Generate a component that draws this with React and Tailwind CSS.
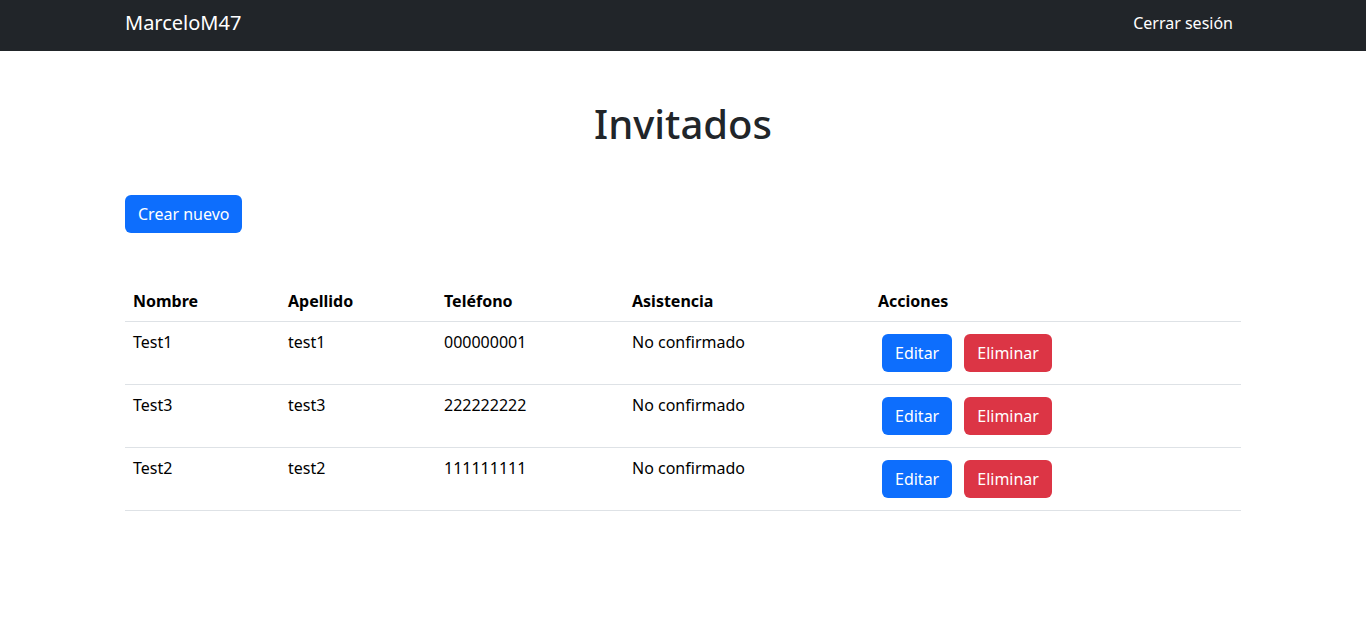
const invitados = [
  { nombre: 'Test1', apellido: 'test1', telefono: '000000001', asistencia: 'No confirmado' },
  { nombre: 'Test3', apellido: 'test3', telefono: '222222222', asistencia: 'No confirmado' },
  { nombre: 'Test2', apellido: 'test2', telefono: '111111111', asistencia: 'No confirmado' },
];

const App = () => {
  return (
    <div className="min-h-screen bg-white font-['Noto_Sans',sans-serif] text-[#212529]">
      <nav className="bg-[#212529] h-[51px]">
        <div className="w-[1116px] mx-auto h-full flex items-center justify-between">
          <span className="text-white text-[20px] leading-[30px] -mt-[5px]">MarceloM47</span>
          <a href="#" className="text-white text-base px-2 -mt-[5px]">Cerrar sesión</a>
        </div>
      </nav>

      <div className="w-[1116px] mx-auto">
        <h1 className="text-[40px] leading-[48px] font-medium text-center mt-[49px] mb-[47px]">Invitados</h1>

        <button className="bg-[#0d6efd] text-white text-base leading-6 px-[13px] py-[7px] rounded-md">
          Crear nuevo
        </button>

        <table className="w-full mt-[48px] text-black text-base leading-6 border-collapse">
          <thead>
            <tr className="border-b border-[#dee2e6]">
              <th className="w-[155px] text-left font-bold p-2">Nombre</th>
              <th className="w-[156px] text-left font-bold p-2">Apellido</th>
              <th className="w-[188px] text-left font-bold p-2">Teléfono</th>
              <th className="w-[246px] text-left font-bold p-2">Asistencia</th>
              <th className="text-left font-bold p-2">Acciones</th>
            </tr>
          </thead>
          <tbody>
            {invitados.map((inv, i) => (
              <tr key={i} className="border-b border-[#dee2e6] align-top">
                <td className="p-2">{inv.nombre}</td>
                <td className="p-2">{inv.apellido}</td>
                <td className="p-2">{inv.telefono}</td>
                <td className="p-2">{inv.asistencia}</td>
                <td className="p-2">
                  <div className="flex gap-3 m-1">
                    <button className="bg-[#0d6efd] text-white px-[13px] py-[7px] rounded-md leading-6">Editar</button>
                    <button className="bg-[#dc3545] text-white px-[13px] py-[7px] rounded-md leading-6">Eliminar</button>
                  </div>
                </td>
              </tr>
            ))}
          </tbody>
        </table>
      </div>
    </div>
  );
};

export default App;
